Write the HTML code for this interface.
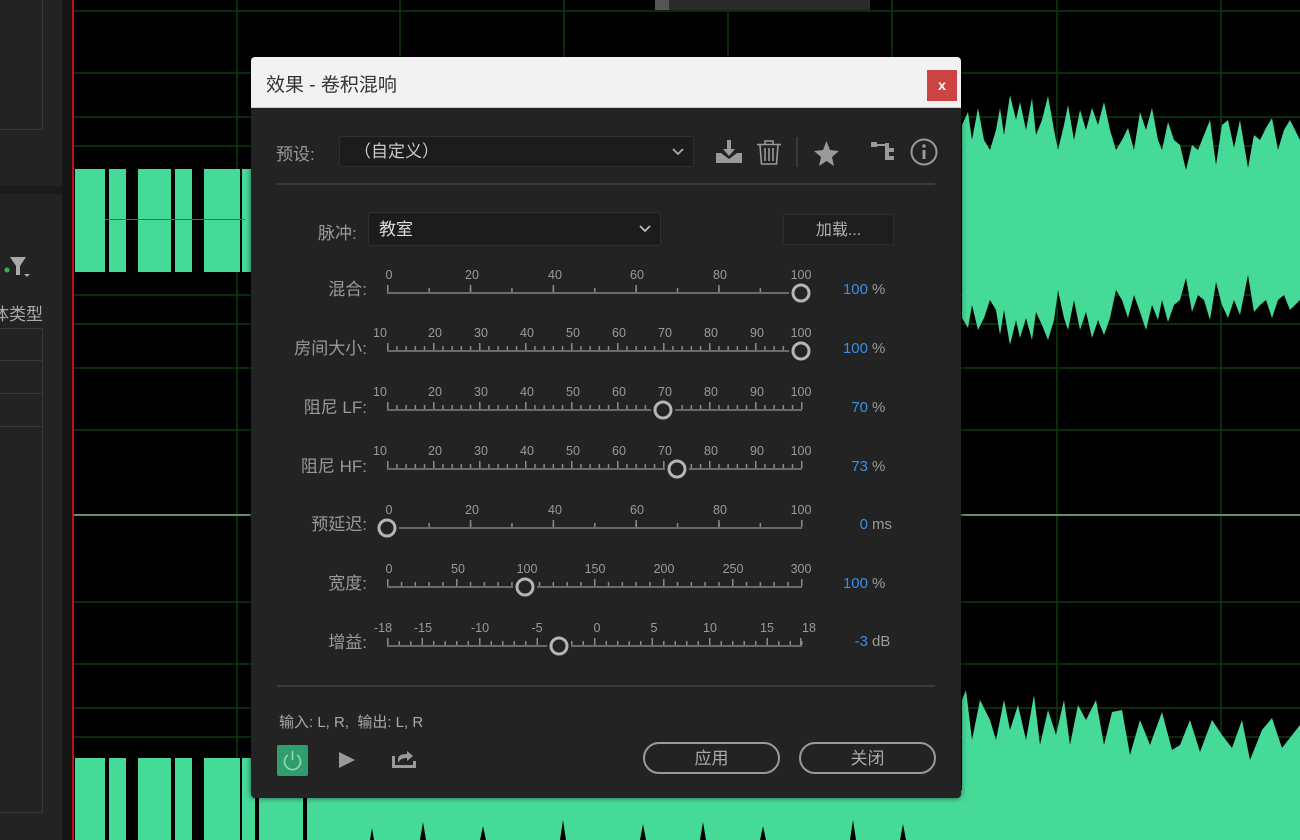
<!DOCTYPE html>
<html><head><meta charset="utf-8"><style>
*{margin:0;padding:0;box-sizing:border-box}
body{width:1300px;height:840px;overflow:hidden;background:#000;position:relative;font-family:"Liberation Sans","Noto Sans CJK SC",sans-serif}
.a{position:absolute}
</style></head><body>
<!-- left panel -->
<div class="a" style="left:0;top:0;width:62px;height:840px;background:#232323"></div>
<div class="a" style="left:0;top:0;width:43px;height:130px;border:1px solid #383838;border-left:none;border-top:none"></div>
<div class="a" style="left:0;top:186px;width:62px;height:8px;background:#1a1a1a"></div>
<div class="a" style="left:0;top:328px;width:43px;height:485px;border:1px solid #383838;border-left:none"></div>
<div class="a" style="left:0;top:360px;width:42px;height:1px;background:#383838"></div>
<div class="a" style="left:0;top:393px;width:42px;height:1px;background:#383838"></div>
<div class="a" style="left:0;top:426px;width:42px;height:1px;background:#383838"></div>
<div class="a" style="left:-25px;top:300px;color:#aaa;font-size:17px;white-space:nowrap">媒体类型</div>
<svg class="a" style="left:0;top:250px" width="40" height="35"><circle cx="7" cy="20" r="2.5" fill="#2fb84a"/><path d="M10 7h16l-6 9v9h-4v-9z" fill="#aaa"/><path d="M24 24h6l-3 3z" fill="#aaa"/></svg>
<div class="a" style="left:62px;top:0;width:11px;height:840px;background:#161616"></div>

<!-- waveform area -->
<svg class="a" style="left:0;top:0" width="1300" height="840">
<g stroke="#0f3a0f" stroke-width="1.5">
<path d="M74 11H1300M74 73H1300M74 117H1300M74 146H1300M74 295H1300M74 324H1300M74 368H1300M74 430H1300M74 602H1300M74 664H1300M74 708H1300M74 737H1300"/>
<path d="M237 0V840M400 0V840M564 0V840M728 0V840M892 0V840M1057 0V840M1221 0V840"/>
</g>
<path d="M74 515H1300" stroke="#6c8a6c" stroke-width="2"/>
<g fill="#46da98">
<rect x="75" y="169" width="30" height="103"/><rect x="109" y="169" width="17" height="103"/><rect x="138" y="169" width="33" height="103"/><rect x="175" y="169" width="17" height="103"/><rect x="204" y="169" width="36" height="103"/><rect x="242" y="169" width="10" height="103"/>
<rect x="105" y="219" width="140" height="1" fill="#2a7a56"/>
<rect x="75" y="758" width="30" height="82"/><rect x="109" y="758" width="17" height="82"/><rect x="138" y="758" width="33" height="82"/><rect x="175" y="758" width="17" height="82"/><rect x="204" y="758" width="36" height="82"/><rect x="242" y="758" width="13" height="82"/>
<rect x="259" y="790" width="44" height="50"/><rect x="307" y="790" width="660" height="50"/>
<path d="M962 125L968 112L972 140L978 108L984 140L990 150L996 130L1000 108L1004 135L1010 95L1016 120L1020 102L1026 130L1032 98L1036 135L1042 120L1048 96L1054 130L1058 150L1064 125L1068 105L1074 140L1080 110L1086 130L1092 108L1098 125L1104 102L1110 130L1116 150L1122 140L1128 128L1134 150L1140 112L1146 130L1152 108L1158 140L1162 150L1168 122L1174 140L1180 145L1186 170L1192 145L1198 150L1204 135L1210 120L1216 165L1222 125L1228 120L1234 148L1240 120L1248 168L1254 135L1260 140L1266 128L1272 118L1278 150L1284 130L1290 120L1300 140L1300 300L1290 310L1284 295L1278 300L1272 318L1266 300L1260 305L1254 312L1248 275L1240 315L1234 300L1228 318L1222 305L1216 282L1210 320L1204 300L1198 295L1192 312L1186 278L1180 300L1174 305L1168 322L1162 300L1158 320L1152 305L1146 330L1140 312L1134 295L1128 318L1122 300L1116 290L1110 318L1104 335L1098 320L1092 338L1086 312L1080 330L1074 300L1068 330L1064 318L1058 290L1054 320L1048 340L1042 325L1036 312L1032 340L1026 318L1020 338L1016 320L1010 345L1004 310L1000 335L996 310L990 300L984 318L978 330L972 305L968 328L962 318Z"/>
<path d="M962 700L966 690L972 740L980 700L990 720L996 740L1004 700L1010 730L1018 705L1026 740L1034 695L1040 745L1048 710L1056 735L1064 700L1070 745L1078 705L1086 720L1096 700L1104 745L1112 712L1122 710L1130 755L1140 720L1150 745L1162 712L1172 750L1180 745L1190 720L1200 752L1212 720L1222 735L1232 748L1242 720L1250 760L1262 730L1272 718L1282 748L1300 725L1300 840L962 840Z"/>
</g>
<path d="M73 0V840" stroke="#c01010" stroke-width="2"/>
<g fill="#000"><path d="M370 840L372 828L374 840M420 840L423 822L426 840M480 840L483 826L486 840M560 840L563 820L566 840M640 840L643 824L646 840M700 840L703 822L706 840M760 840L763 826L766 840M850 840L853 820L856 840M900 840L903 824L906 840"/></g>
<rect x="655" y="0" width="215" height="10" fill="#2a2a2a"/><rect x="655" y="0" width="14" height="10" fill="#555"/>
</svg>

<!-- dialog -->
<div class="a" style="left:251px;top:57px;width:710px;height:741px;background:#232323;border-radius:4px;box-shadow:0 0 6px rgba(0,0,0,.6);overflow:hidden">
 <div class="a" style="left:0;top:0;width:710px;height:51px;background:#f2f2f2;border-bottom:1px solid #cfcfcf"></div>
 <div class="a" style="left:15px;top:13px;font-size:19px;color:#333">效果 - 卷积混响</div>
 <div class="a" style="left:676px;top:13px;width:30px;height:31px;background:#cc4444;color:#fff;font-size:14px;font-weight:bold;text-align:center;line-height:30px">x</div>
</div>
<div class="a" style="left:276px;top:140px;font-size:17px;color:#9a9a9a">预设:</div>
<div class="a" style="left:339px;top:136px;width:355px;height:31px;background:#1c1c1c;border:1px solid #303030;border-radius:3px;color:#c8c8c8;font-size:17px;line-height:29px;padding-left:14px">（自定义）</div>
<div class="a" style="left:368px;top:212px;width:293px;height:34px;background:#1c1c1c;border:1px solid #303030;border-radius:3px;color:#dcdcdc;font-size:17px;line-height:34px;padding-left:10px">教室</div>
<div class="a" style="left:318px;top:219px;font-size:17px;color:#9a9a9a">脉冲:</div>
<div class="a" style="left:783px;top:214px;width:111px;height:31px;background:#1e1e1e;border:1px solid #2e2e2e;border-radius:2px;color:#b0b0b0;font-size:16px;line-height:31px;text-align:center">加载...</div>
<div class="a" style="left:277px;top:183px;width:658px;height:2px;background:#3a3a3a"></div>
<div class="a" style="left:277px;top:685px;width:658px;height:2px;background:#3a3a3a"></div>
<div class="a" style="left:279px;top:711px;font-size:15px;color:#a8a8a8">输入: L, R,&nbsp; 输出: L, R</div>
<div class="a" style="left:277px;top:745px;width:31px;height:31px;background:#2f9e6c;border-radius:2px"></div>
<div class="a" style="left:643px;top:742px;width:137px;height:32px;border:2px solid #9a9a9a;border-radius:16px;color:#aaa;font-size:17px;line-height:30px;text-align:center">应用</div>
<div class="a" style="left:799px;top:742px;width:137px;height:32px;border:2px solid #9a9a9a;border-radius:16px;color:#aaa;font-size:17px;line-height:30px;text-align:center">关闭</div>

<svg class="a" style="left:0;top:0" width="1300" height="840">
<defs>
<pattern id="a1" width="41.4" height="4" patternUnits="userSpaceOnUse"><rect width="1.5" height="4" fill="#8a8a8a"/></pattern>
<pattern id="A1" width="82.8" height="7" patternUnits="userSpaceOnUse"><rect width="1.5" height="7" fill="#8a8a8a"/></pattern>
<pattern id="b1" width="9.2" height="4" patternUnits="userSpaceOnUse"><rect width="1.5" height="4" fill="#8a8a8a"/></pattern>
<pattern id="B1" width="46" height="7" patternUnits="userSpaceOnUse"><rect width="1.5" height="7" fill="#8a8a8a"/></pattern>
<pattern id="c1" width="13.8" height="4" patternUnits="userSpaceOnUse"><rect width="1.5" height="4" fill="#8a8a8a"/></pattern>
<pattern id="C1" width="69" height="7" patternUnits="userSpaceOnUse"><rect width="1.5" height="7" fill="#8a8a8a"/></pattern>
<pattern id="d1" width="11.5" height="4" patternUnits="userSpaceOnUse"><rect width="1.5" height="4" fill="#8a8a8a"/></pattern>
<pattern id="D1" x="34.5" width="57.5" height="7" patternUnits="userSpaceOnUse"><rect width="1.5" height="7" fill="#8a8a8a"/></pattern>
</defs>
<!-- toolbar icons -->
<g fill="#9a9a9a">
<path d="M727 140h4v9h4l-6 7-6-7h4z"/><path d="M716 153h5l8 6 8-6h5v10h-26z"/>
<path d="M814 151l9-1 3.5-9 3.5 9 9 1-7 6 2 9-7.5-5-7.5 5 2-9z"/>
<path d="M871 142h6v5h-6zM876 144h9v2h-9zM885 143h4v17h-4zM889 148h5v4h-5zM889 156h5v4h-5z"/>
</g>
<g fill="none" stroke="#9a9a9a" stroke-width="1.6">
<path d="M757 144.5h24M765 144v-3h8v3M760 145l1.5 19h15l1.5-19M765 148v13M769 148v13M773 148v13"/>
</g>
<rect x="796" y="137" width="2" height="30" fill="#3a3a3a"/>
<circle cx="924" cy="152" r="12.5" fill="none" stroke="#9a9a9a" stroke-width="2"/>
<rect x="922.5" y="150" width="3" height="9" fill="#9a9a9a"/><circle cx="924" cy="146" r="1.8" fill="#9a9a9a"/>
<path d="M673 149l5 5 5-5" fill="none" stroke="#aaa" stroke-width="1.8"/>
<path d="M640 226l5 5 5-5" fill="none" stroke="#bbb" stroke-width="1.8"/>
<!-- bottom icons -->
<path d="M288 755a8 8 0 1 0 9 0" fill="none" stroke="#9ad6b8" stroke-width="1.6"/><path d="M292.5 751v9" stroke="#9ad6b8" stroke-width="1.6"/>
<path d="M339 752l16 8-16 8z" fill="#999"/>
<path d="M392 756v12h24v-7h-3v4h-18v-9z" fill="#999"/><path d="M398 763v-4c0-3 3-5 9-5v-3l6 5-6 5v-3c-4 0-7 1-9 5z" fill="#999"/>

<g font-family="Liberation Sans, sans-serif" font-size="12.5" fill="#9a9a9a" text-anchor="middle">
<g transform="translate(387,293)">
<rect x="0" y="-1" width="415" height="2" fill="#6a6a6a"/><rect x="0" y="-5" width="416" height="4" fill="url(#a1)"/><rect x="0" y="-8" width="416" height="7" fill="url(#A1)"/>
<text x="2" y="-14">0</text><text x="85" y="-14">20</text><text x="168" y="-14">40</text><text x="250" y="-14">60</text><text x="333" y="-14">80</text><text x="414" y="-14">100</text>
<circle cx="414" cy="0" r="12" fill="#232323"/><circle cx="414" cy="0" r="8" fill="#232323" stroke="#b5b5b5" stroke-width="3"/>
</g>
<g transform="translate(387,351)">
<rect x="0" y="-1" width="415" height="2" fill="#6a6a6a"/><rect x="0" y="-5" width="416" height="4" fill="url(#b1)"/><rect x="0" y="-8" width="416" height="7" fill="url(#B1)"/>
<text x="-7" y="-14">10</text><text x="48" y="-14">20</text><text x="94" y="-14">30</text><text x="140" y="-14">40</text><text x="186" y="-14">50</text><text x="232" y="-14">60</text><text x="278" y="-14">70</text><text x="324" y="-14">80</text><text x="370" y="-14">90</text><text x="414" y="-14">100</text>
<circle cx="414" cy="0" r="12" fill="#232323"/><circle cx="414" cy="0" r="8" fill="#232323" stroke="#b5b5b5" stroke-width="3"/>
</g>
<g transform="translate(387,410)">
<rect x="0" y="-1" width="415" height="2" fill="#6a6a6a"/><rect x="0" y="-5" width="416" height="4" fill="url(#b1)"/><rect x="0" y="-8" width="416" height="7" fill="url(#B1)"/>
<text x="-7" y="-14">10</text><text x="48" y="-14">20</text><text x="94" y="-14">30</text><text x="140" y="-14">40</text><text x="186" y="-14">50</text><text x="232" y="-14">60</text><text x="278" y="-14">70</text><text x="324" y="-14">80</text><text x="370" y="-14">90</text><text x="414" y="-14">100</text>
<circle cx="276" cy="0" r="12" fill="#232323"/><circle cx="276" cy="0" r="8" fill="#232323" stroke="#b5b5b5" stroke-width="3"/>
</g>
<g transform="translate(387,469)">
<rect x="0" y="-1" width="415" height="2" fill="#6a6a6a"/><rect x="0" y="-5" width="416" height="4" fill="url(#b1)"/><rect x="0" y="-8" width="416" height="7" fill="url(#B1)"/>
<text x="-7" y="-14">10</text><text x="48" y="-14">20</text><text x="94" y="-14">30</text><text x="140" y="-14">40</text><text x="186" y="-14">50</text><text x="232" y="-14">60</text><text x="278" y="-14">70</text><text x="324" y="-14">80</text><text x="370" y="-14">90</text><text x="414" y="-14">100</text>
<circle cx="290" cy="0" r="12" fill="#232323"/><circle cx="290" cy="0" r="8" fill="#232323" stroke="#b5b5b5" stroke-width="3"/>
</g>
<g transform="translate(387,528)">
<rect x="0" y="-1" width="415" height="2" fill="#6a6a6a"/><rect x="0" y="-5" width="416" height="4" fill="url(#a1)"/><rect x="0" y="-8" width="416" height="7" fill="url(#A1)"/>
<text x="2" y="-14">0</text><text x="85" y="-14">20</text><text x="168" y="-14">40</text><text x="250" y="-14">60</text><text x="333" y="-14">80</text><text x="414" y="-14">100</text>
<circle cx="0" cy="0" r="12" fill="#232323"/><circle cx="0" cy="0" r="8" fill="#232323" stroke="#b5b5b5" stroke-width="3"/>
</g>
<g transform="translate(387,587)">
<rect x="0" y="-1" width="415" height="2" fill="#6a6a6a"/><rect x="0" y="-5" width="416" height="4" fill="url(#c1)"/><rect x="0" y="-8" width="416" height="7" fill="url(#C1)"/>
<text x="2" y="-14">0</text><text x="71" y="-14">50</text><text x="140" y="-14">100</text><text x="208" y="-14">150</text><text x="277" y="-14">200</text><text x="346" y="-14">250</text><text x="414" y="-14">300</text>
<circle cx="138" cy="0" r="12" fill="#232323"/><circle cx="138" cy="0" r="8" fill="#232323" stroke="#b5b5b5" stroke-width="3"/>
</g>
<g transform="translate(387,646)">
<rect x="0" y="-1" width="415" height="2" fill="#6a6a6a"/><rect x="0" y="-5" width="416" height="4" fill="url(#d1)"/><rect x="0" y="-8" width="416" height="7" fill="url(#D1)"/><rect x="0" y="-8" width="1.5" height="7" fill="#8a8a8a"/><rect x="413" y="-8" width="1.5" height="7" fill="#8a8a8a"/>
<text x="-4" y="-14">-18</text><text x="36" y="-14">-15</text><text x="93" y="-14">-10</text><text x="150" y="-14">-5</text><text x="210" y="-14">0</text><text x="267" y="-14">5</text><text x="323" y="-14">10</text><text x="380" y="-14">15</text><text x="422" y="-14">18</text>
<circle cx="172" cy="0" r="12" fill="#232323"/><circle cx="172" cy="0" r="8" fill="#232323" stroke="#b5b5b5" stroke-width="3"/>
</g>
</g>
<g font-family="Liberation Sans, Noto Sans CJK SC, sans-serif" font-size="17" fill="#9a9a9a" text-anchor="end">
<text x="367" y="295">混合:</text><text x="367" y="354">房间大小:</text><text x="367" y="413">阻尼 LF:</text><text x="367" y="472">阻尼 HF:</text><text x="367" y="530">预延迟:</text><text x="367" y="589">宽度:</text><text x="367" y="648">增益:</text>
</g>
<g font-family="Liberation Sans, sans-serif" font-size="15">
<g fill="#3a8fe6" text-anchor="end"><text x="868" y="294">100</text><text x="868" y="353">100</text><text x="868" y="412">70</text><text x="868" y="471">73</text><text x="868" y="529">0</text><text x="868" y="588">100</text><text x="868" y="646">-3</text></g>
<g fill="#9a9a9a"><text x="872" y="294">%</text><text x="872" y="353">%</text><text x="872" y="412">%</text><text x="872" y="471">%</text><text x="872" y="529">ms</text><text x="872" y="588">%</text><text x="872" y="646">dB</text></g>
</g>
</svg>
</body></html>
